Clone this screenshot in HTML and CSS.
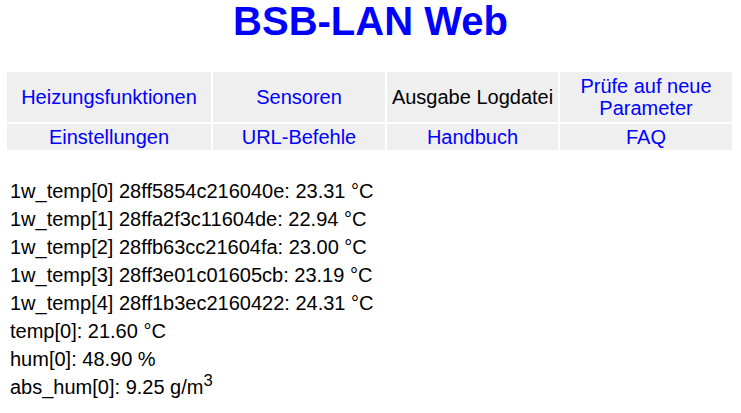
FILE: index.html
```html
<!DOCTYPE html>
<html lang="de">
<head>
<meta charset="utf-8">
<title>BSB-LAN Web</title>
<link rel="stylesheet" href="styles.css">
</head>
<body>
<h1 class="title">BSB-LAN Web</h1>
<table class="nav">
  <colgroup>
    <col class="c1"><col class="c2"><col class="c3"><col class="c4">
  </colgroup>
  <tr class="row-top">
    <td><a href="#">Heizungsfunktionen</a></td>
    <td><a href="#">Sensoren</a></td>
    <td class="plain">Ausgabe Logdatei</td>
    <td><a href="#">Prüfe auf neue Parameter</a></td>
  </tr>
  <tr>
    <td><a href="#">Einstellungen</a></td>
    <td><a href="#">URL-Befehle</a></td>
    <td><a href="#">Handbuch</a></td>
    <td><a href="#">FAQ</a></td>
  </tr>
</table>
<div class="values">
  <div class="line">1w_temp[0] 28ff5854c216040e: 23.31 °C</div>
  <div class="line">1w_temp[1] 28ffa2f3c11604de: 22.94 °C</div>
  <div class="line">1w_temp[2] 28ffb63cc21604fa: 23.00 °C</div>
  <div class="line">1w_temp[3] 28ff3e01c01605cb: 23.19 °C</div>
  <div class="line">1w_temp[4] 28ff1b3ec2160422: 24.31 °C</div>
  <div class="line">temp[0]: 21.60 °C</div>
  <div class="line">hum[0]: 48.90 %</div>
  <div class="line">abs_hum[0]: 9.25 g/m<sup class="sup">3</sup></div>
</div>
</body>
</html>
```
FILE: styles.css
```css
html, body {
  margin: 0;
  padding: 0;
  background: #ffffff;
}
body {
  font-family: "Liberation Sans", Arial, sans-serif;
  font-size: 20px;
  color: #000000;
}
.title {
  margin: 0 0 27px 0;
  font-size: 40px;
  line-height: 43px;
  font-weight: bold;
  color: #0000ff;
  text-align: center;
}
.nav {
  margin: 0 0 0 5px;
  width: 729px;
  border-collapse: separate;
  border-spacing: 2px;
  table-layout: fixed;
}
.c1 { width: 204px; }
.c2 { width: 172px; }
.c3 { width: 171px; }
.c4 { width: 172px; }
.nav td {
  background: #efefef;
  text-align: center;
  vertical-align: middle;
  padding: 2px 1px;
  line-height: 22px;
}
.row-top td {
  height: 46px;
}
.nav a {
  color: #0000ff;
  text-decoration: none;
}
.nav .plain {
  color: #000000;
}
.values {
  margin: 25px 0 0 10px;
}
.line {
  line-height: 28px;
}
.sup {
  line-height: 0;
}
```
